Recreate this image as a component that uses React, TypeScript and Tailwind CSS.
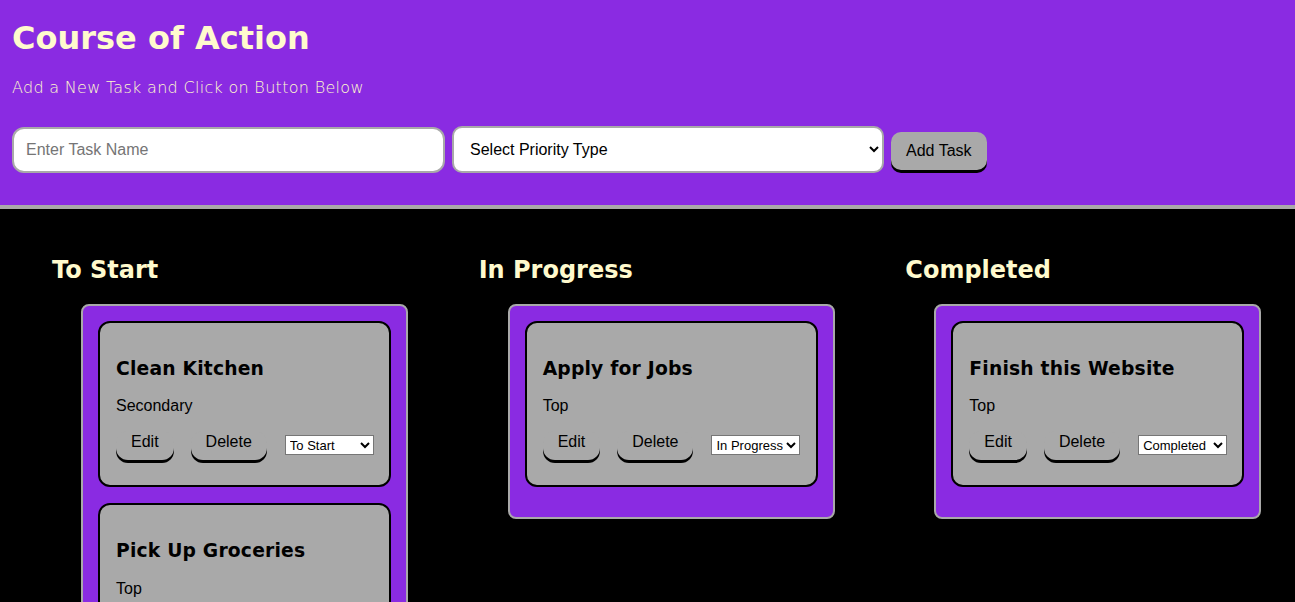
import React from "react";

type Task = { name: string; priority: string; status: string };

const COLUMNS: { title: string; tasks: Task[] }[] = [
  {
    title: "To Start",
    tasks: [
      { name: "Clean Kitchen", priority: "Secondary", status: "To Start" },
      { name: "Pick Up Groceries", priority: "Top", status: "To Start" },
    ],
  },
  {
    title: "In Progress",
    tasks: [{ name: "Apply for Jobs", priority: "Top", status: "In Progress" }],
  },
  {
    title: "Completed",
    tasks: [
      { name: "Finish this Website", priority: "Top", status: "Completed" },
    ],
  },
];

const heading = { fontFamily: '"DejaVu Sans", Verdana, sans-serif' };
const body = { fontFamily: '"Liberation Sans", Arial, sans-serif' };

function TaskCard({ task }: { task: Task }) {
  return (
    <div className="mb-4 rounded-[12px] border-2 border-black bg-[#a9a9a9] p-4 text-black">
      <h3
        style={heading}
        className="my-[18.72px] text-[18.72px] font-bold leading-[normal] tracking-[0.2px]"
      >
        {task.name}
      </h3>
      <p style={body} className="mb-4 text-base leading-[normal]">
        {task.priority}
      </p>
      <div style={body} className="flex h-[38px] items-start">
        <button className="h-[29px] rounded-[12px] bg-[#a9a9a9] px-[15px] pb-[9px] pt-[2px] text-base leading-[normal] shadow-[0_3px_0_#000]">
          Edit
        </button>
        <button className="ml-[17px] h-[29px] rounded-[12px] bg-[#a9a9a9] px-[15px] pb-[9px] pt-[2px] text-base leading-[normal] shadow-[0_3px_0_#000]">
          Delete
        </button>
        <select
          defaultValue={task.status}
          className="ml-[18px] mt-[4px] h-[20px] w-[90px] border border-[#767676] bg-white text-[13px] leading-[normal] text-black"
        >
          <option>To Start</option>
          <option>In Progress</option>
          <option>Completed</option>
        </select>
      </div>
    </div>
  );
}

export default function App() {
  return (
    <div className="min-h-screen bg-black">
      {/* Header */}
      <div className="border-b-4 border-[#a9a9a9] bg-[#8a2be2] px-3 pb-[32px] pt-[19px]">
        <h1
          style={heading}
          className="mb-[21px] text-[32px] font-bold leading-[normal] text-[#fffacd]"
        >
          Course of Action
        </h1>
        <p
          style={heading}
          className="text-base font-extralight leading-[normal] tracking-[0.3px] text-[#fffacd]"
        >
          Add a New Task and Click on Button Below
        </p>
        <div style={body} className="mt-[29px] flex items-start gap-[7px]">
          <input
            placeholder="Enter Task Name"
            className="mt-px h-[46px] w-[433px] rounded-[12px] border-2 border-[#a9a9a9] bg-white px-3 text-base leading-[normal] text-black outline-none placeholder:text-[#757575]"
          />
          <select className="h-[47px] w-[432px] rounded-[10px] border-2 border-[#a9a9a9] bg-white pl-3 pr-2 text-base leading-[normal] text-black">
            <option>Select Priority Type</option>
            <option>Top</option>
            <option>Secondary</option>
          </select>
          <button className="mt-[6px] h-[38px] rounded-[10px] bg-[#a9a9a9] px-[15px] text-base leading-[normal] text-black shadow-[0_3px_0_#000]">
            Add Task
          </button>
        </div>
      </div>

      {/* Board */}
      <div className="grid grid-cols-3 pl-3 pr-[3px] pt-[47px]">
        {COLUMNS.map((col) => (
          <div key={col.title} className="pl-10">
            <h2
              style={heading}
              className="mb-[20px] text-2xl font-bold leading-[normal] text-[#fffacd]"
            >
              {col.title}
            </h2>
            <div className="ml-[29px] w-[327px] rounded-[8px] border-2 border-[#a9a9a9] bg-[#8a2be2] px-[15px] pb-[14px] pt-[15px]">
              {col.tasks.map((t) => (
                <TaskCard key={t.name} task={t} />
              ))}
            </div>
          </div>
        ))}
      </div>
    </div>
  );
}
